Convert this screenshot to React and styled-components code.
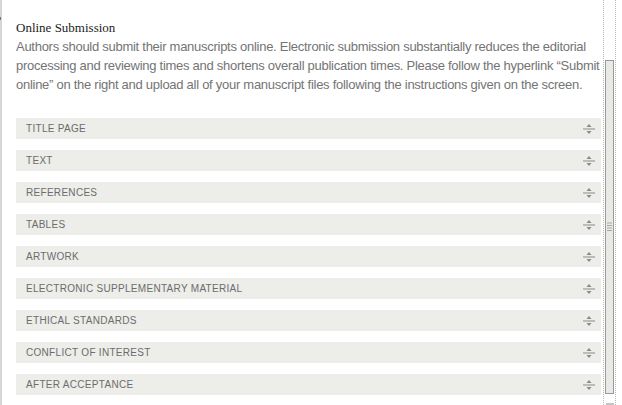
import React from "react";
import styled, { createGlobalStyle } from "styled-components";

const Global = createGlobalStyle`
  html, body { margin: 0; padding: 0; background: #fff; }
  body { width: 622px; height: 405px; overflow: hidden; }
`;

const Page = styled.div`
  display: flex;
  height: 405px;
  width: 622px;
  box-sizing: border-box;
`;

const Content = styled.div`
  flex: 1;
  min-width: 0;
  border-left: 2px solid #d6d6d6;
  padding: 20px 2px 0 14px;
  position: relative;
`;

const Tick = styled.span`
  position: absolute;
  left: -2px;
  top: 17px;
  width: 1px;
  height: 3px;
  background: #777;
`;

const Title = styled.h2`
  margin: 0;
  font-family: "Liberation Serif", "Times New Roman", serif;
  font-weight: normal;
  font-size: 13px;
  line-height: 15px;
  color: #222;
`;

const Intro = styled.p`
  margin: 2px -12px 0 0;
  font-family: "Liberation Sans", Arial, sans-serif;
  font-size: 13px;
  line-height: 19px;
  letter-spacing: -0.27px;
  color: #747474;
`;

const Line = styled.span`
  display: block;
  white-space: nowrap;
`;

const List = styled.div`
  margin-top: 24px;
  display: flex;
  flex-direction: column;
  gap: 11px;
`;

const Row = styled.div`
  height: 21px;
  background: #edede9;
  display: flex;
  align-items: center;
  justify-content: space-between;
  padding: 0 6px 0 10px;
  font-family: "Liberation Sans", Arial, sans-serif;
  font-size: 10px;
  letter-spacing: 0.3px;
  color: #6c6c6c;
  text-transform: uppercase;
`;

const Track = styled.div`
  width: 11px;
  border-left: 1px dotted #b8b8b8;
  border-right: 1px dotted #b8b8b8;
  display: flex;
  flex-direction: column;
  align-items: center;
  padding-top: 60px;
`;

const Thumb = styled.div`
  width: 9px;
  height: 335px;
  box-sizing: border-box;
  border: 1px solid #9a9a9a;
  background: #e9e9e5;
  display: flex;
  align-items: center;
  justify-content: center;
`;

const Stub = styled.div`
  margin-top: 9px;
  width: 8px;
  height: 2px;
  background: #c4c4c4;
`;

const Spacer = styled.div`
  width: 6px;
`;

const SortIcon = () => (
  <svg width="12" height="12" viewBox="0 0 12 12">
    <polygon points="6,1 8.5,4 3.5,4" fill="#8a8a8a" />
    <rect x="0" y="5.5" width="12" height="1" fill="#8a8a8a" />
    <polygon points="3.5,8 8.5,8 6,11" fill="#8a8a8a" />
  </svg>
);

const Grip = () => (
  <svg width="5" height="10" viewBox="0 0 5 10">
    {[0.5, 3, 5.5, 8].map((y) => (
      <rect key={y} x="0" y={y} width="5" height="1" fill="#a8a8a8" />
    ))}
  </svg>
);

const introLines = [
  "Authors should submit their manuscripts online. Electronic submission substantially reduces the editorial",
  "processing and reviewing times and shortens overall publication times. Please follow the hyperlink “Submit",
  "online” on the right and upload all of your manuscript files following the instructions given on the screen.",
];

const sections = [
  "Title page",
  "Text",
  "References",
  "Tables",
  "Artwork",
  "Electronic Supplementary Material",
  "Ethical Standards",
  "Conflict of interest",
  "After acceptance",
];

export default function App() {
  return (
    <>
      <Global />
      <Page>
        <Content>
          <Tick />
          <Title>Online Submission</Title>
          <Intro>
            {introLines.map((l) => (
              <Line key={l}>{l}</Line>
            ))}
          </Intro>
          <List>
            {sections.map((s) => (
              <Row key={s}>
                <span>{s}</span>
                <SortIcon />
              </Row>
            ))}
          </List>
        </Content>
        <Track>
          <Thumb>
            <Grip />
          </Thumb>
          <Stub />
        </Track>
        <Spacer />
      </Page>
    </>
  );
}
